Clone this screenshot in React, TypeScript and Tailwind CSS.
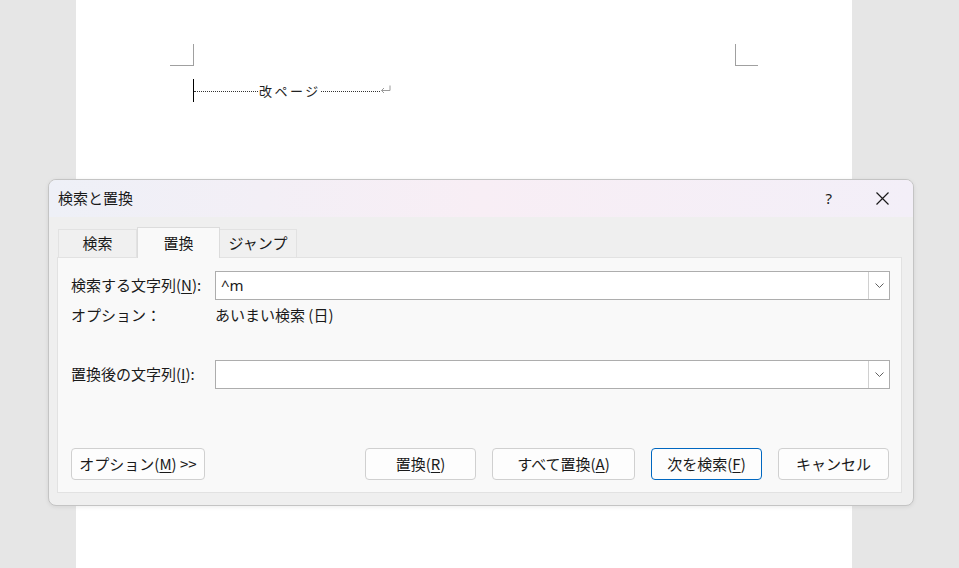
import React from 'react'

const font = { fontFamily: '"Noto Sans CJK JP", "Noto Sans", sans-serif' }

function U({ children }: { children: React.ReactNode }) {
  return <span className="underline underline-offset-2">{children}</span>
}

function Combo({ value }: { value?: string }) {
  return (
    <div className="flex h-[29px] flex-1 border border-[#adadad] bg-white">
      <div className="flex flex-1 items-center px-[5px] text-[15px] text-[#1a1a1a]" style={{ fontFamily: '"Noto Sans", sans-serif' }}>
        {value}
      </div>
      <div className="flex w-[21px] items-center justify-center border-l border-[#d0d0d0]">
        <svg width="9" height="5" viewBox="0 0 9 5" fill="none" stroke="#606060" strokeWidth="1">
          <path d="M0.5 0.5 L4.5 4.5 L8.5 0.5" />
        </svg>
      </div>
    </div>
  )
}

function Btn({ children, primary, w }: { children: React.ReactNode; primary?: boolean; w: string }) {
  return (
    <button
      className={`flex h-[32px] items-center justify-center rounded-[4px] bg-[#fdfdfd] text-[15px] text-[#1a1a1a] ${w} ${
        primary ? 'border border-[#0067c0]' : 'border border-[#d0d0d0]'
      }`}
    >
      {children}
    </button>
  )
}

export default function App() {
  return (
    <div className="relative flex h-[568px] w-[959px] overflow-hidden bg-[#e6e6e6]" style={font}>
      {/* document page */}
      <div className="ml-[76px] h-full w-[776px] bg-white">
        <div className="relative h-full">
          <div className="absolute left-[94px] top-[44px] h-[22px] w-[24px] border-b border-r border-[#a0a0a0]" />
          <div className="absolute left-[659px] top-[44px] h-[22px] w-[23px] border-b border-l border-[#a0a0a0]" />
          <div className="absolute left-[117px] top-[79px] flex h-[23px] items-center">
            <div className="h-full w-px bg-black" />
            <div className="mt-[2px] w-[64px] border-t border-dotted border-[#333]" />
            <span className="pl-[1px] text-[13px] leading-none tracking-[2.5px] text-[#222]">改ページ</span>
            <div className="mt-[2px] w-[59px] border-t border-dotted border-[#333]" />
            <svg width="11" height="9" viewBox="0 0 11 9" fill="none" stroke="#9a9a9a" strokeWidth="1" className="-mt-[3px]">
              <path d="M10 0.5 V5.5 H1.5 M4 3 L1.5 5.5 L4 8" />
            </svg>
          </div>
        </div>
      </div>

      {/* dialog window */}
      <div className="absolute left-[48px] top-[179px] flex h-[327px] w-[866px] flex-col overflow-hidden rounded-[8px] border border-[#c4c4c4] bg-[#efefef] shadow-[0_1px_4px_rgba(0,0,0,0.08)]">
        <div className="flex h-[37px] items-center bg-gradient-to-r from-[#eef0f7] via-[#f8eef5] to-[#f3eff8] pl-[9px] pr-[24px]">
          <span className="flex-1 text-[15px] text-[#1a1a1a]">検索と置換</span>
          <span className="mr-[44px] text-[15px] text-[#1a1a1a]" style={{ fontFamily: '"Noto Sans", sans-serif' }}>?</span>
          <svg width="13" height="13" viewBox="0 0 13 13" stroke="#1a1a1a" strokeWidth="1.2">
            <path d="M0.5 0.5 L12.5 12.5 M12.5 0.5 L0.5 12.5" />
          </svg>
        </div>

        <div className="flex flex-1 flex-col pl-[8px] pr-[11px] pb-[12px] pt-[10px]">
          {/* tabs */}
          <div className="flex h-[30px] items-end text-[15px] text-[#1a1a1a]">
            <div className="ml-[1px] flex h-[28px] w-[79px] items-center justify-center border border-b-0 border-[#e2e2e2] bg-[#f0f0f0]">検索</div>
            <div className="relative z-10 -mb-px flex h-[31px] w-[83px] items-center justify-center border border-b-0 border-[#dcdcdc] bg-[#f9f9f9]">置換</div>
            <div className="flex h-[28px] w-[77px] items-center justify-center border border-b-0 border-l-0 border-[#e2e2e2] bg-[#f0f0f0]">ジャンプ</div>
          </div>

          {/* panel */}
          <div className="flex flex-1 flex-col border border-[#e2e2e2] bg-[#f9f9f9] pl-[13px] pr-[11px] pt-[13px] text-[15px] text-[#1a1a1a]">
            <div className="flex items-center">
              <div className="w-[144px]">
                検索する文字列(<U>N</U>):
              </div>
              <Combo value="^m" />
            </div>
            <div className="mt-[4px] flex h-[22px] items-center">
              <div className="w-[144px]">オプション：</div>
              <div>あいまい検索 (日)</div>
            </div>
            <div className="mt-[34px] flex items-center">
              <div className="w-[144px]">
                置換後の文字列(<U>I</U>):
              </div>
              <Combo />
            </div>

            <div className="mt-auto mb-[12px] flex items-center">
              <Btn w="w-[134px]">
                オプション(<U>M</U>) &gt;&gt;
              </Btn>
              <div className="flex-1" />
              <div className="mr-[1px] flex gap-[16px]">
                <Btn w="w-[111px]">
                  置換(<U>R</U>)
                </Btn>
                <Btn w="w-[143px]">
                  すべて置換(<U>A</U>)
                </Btn>
                <Btn w="w-[111px]" primary>
                  次を検索(<U>F</U>)
                </Btn>
                <Btn w="w-[111px]">キャンセル</Btn>
              </div>
            </div>
          </div>
        </div>
      </div>
    </div>
  )
}
